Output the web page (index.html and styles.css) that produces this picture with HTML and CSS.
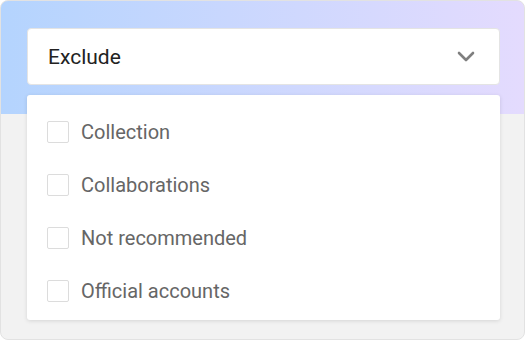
FILE: index.html
```html
<!DOCTYPE html>
<html lang="en">
<head>
   <meta charset="UTF-8">
   <meta name="viewport" content="width=device-width, initial-scale=1.0">
   <title>Exclude filter</title>
   <link rel="stylesheet" href="styles.css">
</head>

<body>

   <div class="card">
       <!-- Select Box -->
       <div class="select">
           <span class="select-label">Exclude</span>
           <svg class="chevron" width="18" height="11" viewBox="0 0 18 11">
               <path d="M2 2 L9 9 L16 2" fill="none" stroke="#7f7f7f" stroke-width="2.6" stroke-linecap="round" stroke-linejoin="round"/>
           </svg>
       </div>

       <!-- Dropdown Options -->
       <div class="dropdown">
           <label class="option"><span class="box"></span>Collection</label>
           <label class="option"><span class="box"></span>Collaborations</label>
           <label class="option"><span class="box"></span>Not recommended</label>
           <label class="option"><span class="box"></span>Official accounts</label>
       </div>
   </div>

</body>
</html>
```

FILE: styles.css
```css
body {
    margin: 0;
    font-family: Roboto, "Liberation Sans", sans-serif;
}
.card {
    width: 525px;
    height: 340px;
    box-sizing: border-box;
    border: 1px solid #e2e2e2;
    border-radius: 8px;
    background: linear-gradient(90deg, #b4d4fe, #e4dbfe) no-repeat top / 100% 113px, #f2f2f2;
    padding: 27px 24px 0 26px;
}
.select {
    display: flex;
    align-items: center;
    justify-content: space-between;
    height: 57px;
    box-sizing: border-box;
    background-color: white;
    border: 1px solid #e4e4e4;
    border-radius: 4px;
    padding: 0 24px 0 20px;
}
.select-label {
    font-size: 21px;
    color: #222;
}
.chevron {
    display: block;
}
.dropdown {
    margin-top: 10px;
    height: 225px;
    box-sizing: border-box;
    padding-top: 10px;
    background-color: white;
    border-radius: 3px;
    box-shadow: 0 1px 4px rgba(0, 0, 0, 0.12);
}
.option {
    display: flex;
    align-items: center;
    gap: 12px;
    height: 53px;
    padding-left: 20px;
    font-size: 20px;
    color: #666;
}
.box {
    width: 22px;
    height: 22px;
    box-sizing: border-box;
    border: 1px solid #dcdcdc;
    border-radius: 2px;
}
```
